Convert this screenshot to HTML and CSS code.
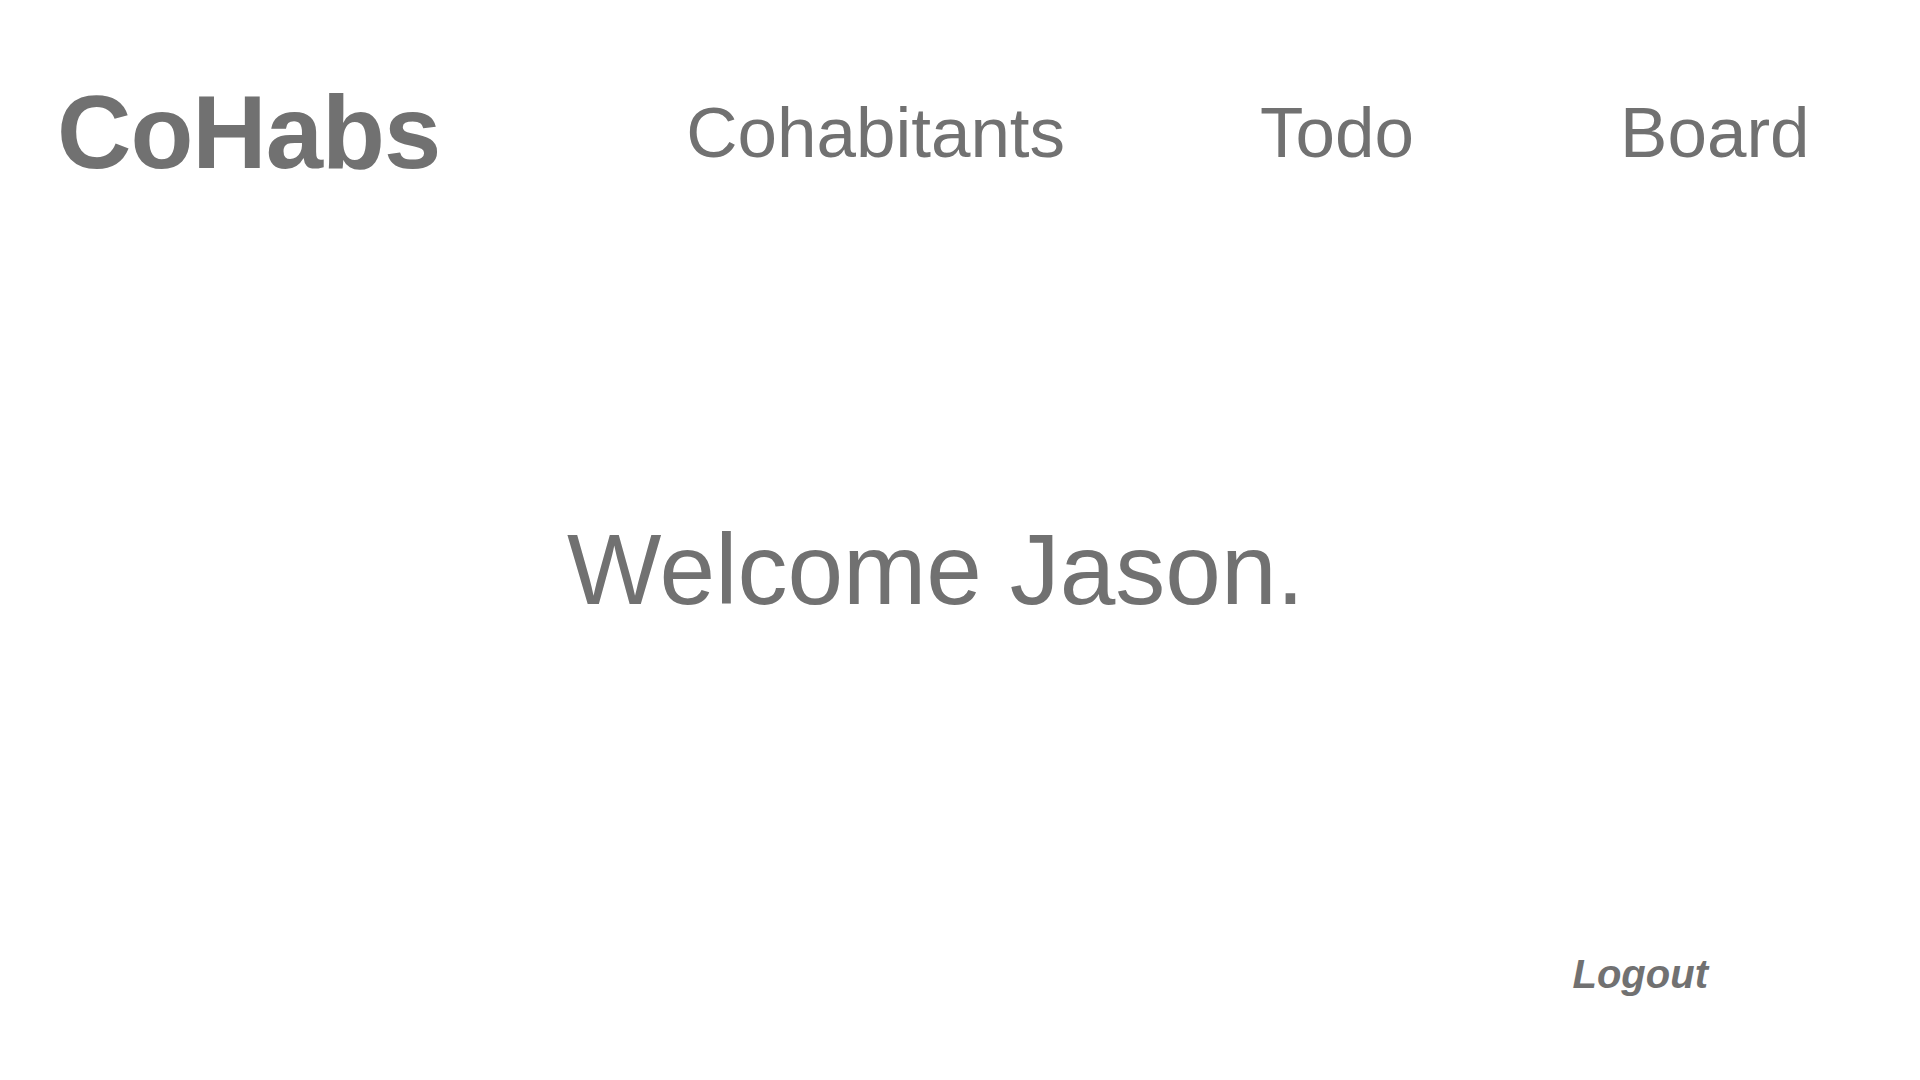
FILE: index.html
```html
<!DOCTYPE html>
<html lang="en">
<head>
<meta charset="utf-8">
<title>CoHabs</title>
<link rel="stylesheet" href="styles.css">
</head>
<body>
<div class="page">
  <header class="header">
    <div class="logo">CoHabs</div>
    <nav class="nav">
      <a class="nav-link nav-cohab" href="#">Cohabitants</a>
      <a class="nav-link nav-todo" href="#">Todo</a>
      <a class="nav-link nav-board" href="#">Board</a>
    </nav>
  </header>
  <main class="main">
    <h1 class="welcome">Welcome Jason.</h1>
  </main>
  <footer class="footer">
    <a class="logout" href="#">Logout</a>
  </footer>
</div>
</body>
</html>
```

FILE: styles.css
```css
html, body {
  margin: 0;
  padding: 0;
  background: #ffffff;
}
.page {
  width: 1920px;
  height: 1080px;
  display: flex;
  flex-direction: column;
  font-family: "Liberation Sans", Arial, sans-serif;
  color: #717171;
}
.header {
  height: 264px;
  display: flex;
  align-items: center;
  padding-left: 57px;
}
.logo {
  font-size: 103px;
  font-weight: 700;
  line-height: 1;
  letter-spacing: -1px;
}
.nav {
  display: flex;
  align-items: center;
  margin-left: 246px;
}
.nav-link {
  font-size: 71px;
  line-height: 1;
  color: #717171;
  text-decoration: none;
}
.nav-todo {
  margin-left: 195px;
}
.nav-board {
  margin-left: 206px;
}
.main {
  padding-top: 255px;
  padding-left: 567px;
}
.welcome {
  margin: 0;
  font-size: 100px;
  font-weight: 400;
  line-height: 1;
}
.footer {
  display: flex;
  justify-content: flex-end;
  padding-top: 335px;
  padding-right: 212px;
}
.logout {
  font-size: 40px;
  font-weight: 700;
  font-style: italic;
  line-height: 1;
  color: #717171;
  text-decoration: none;
}
```
